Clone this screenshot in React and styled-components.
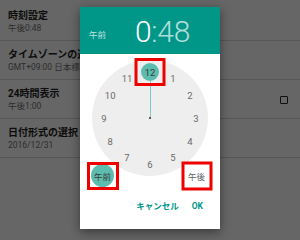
import React from 'react';
import styled, { createGlobalStyle } from 'styled-components';

const GlobalStyle = createGlobalStyle`
  html, body {
    margin: 0;
    padding: 0;
    width: 300px;
    height: 240px;
    overflow: hidden;
    font-family: Roboto, "Noto Sans CJK JP", sans-serif;
  }
`;

const TEAL = '#009688';

const Screen = styled.div`
  position: relative;
  width: 300px;
  height: 240px;
  background: #ffffff;
  overflow: hidden;
`;

const SettingsList = styled.div`
  display: flex;
  flex-direction: column;
  padding-top: 2px;
`;

const Row = styled.div`
  display: flex;
  align-items: center;
  height: 38px;
  padding: 0 12px 0 8px;
  border-bottom: 1px solid #d6d6d6;
`;

const RowText = styled.div`
  flex: 1;
  display: flex;
  flex-direction: column;
  gap: 2px;
  padding-top: 1px;
`;

const Title = styled.div`
  font-size: 10px;
  font-weight: 700;
  color: #212121;
  line-height: 11px;
  white-space: nowrap;
`;

const Subtitle = styled.div`
  font-size: 8.5px;
  color: #737373;
  line-height: 10px;
  white-space: nowrap;
`;

const Checkbox = styled.div`
  width: 6px;
  height: 6px;
  border: 1.5px solid #262626;
  border-radius: 1px;
  margin-top: 1px;
`;

const Scrim = styled.div`
  position: absolute;
  inset: 0;
  background: rgba(0, 0, 0, 0.6);
  display: flex;
  justify-content: center;
  align-items: flex-start;
  padding-top: 7px;
`;

const Dialog = styled.div`
  width: 140px;
  height: 222px;
  background: #ffffff;
  box-shadow: 0 3px 10px rgba(0, 0, 0, 0.45);
  display: flex;
  flex-direction: column;
`;

const Header = styled.div`
  height: 47px;
  background: ${TEAL};
  display: flex;
  align-items: flex-end;
  justify-content: space-between;
  padding: 0 30px 8px 9px;
  box-sizing: border-box;
`;

const HeaderAmPm = styled.div`
  font-size: 8.5px;
  color: rgba(255, 255, 255, 0.75);
  line-height: 10px;
  margin-bottom: 6px;
`;

const Time = styled.div`
  font-size: 30px;
  font-weight: 300;
  line-height: 28px;
  color: rgba(255, 255, 255, 0.7);
  letter-spacing: -0.3px;
`;

const Hour = styled.span`
  color: #ffffff;
`;

const Body = styled.div`
  flex: 1;
  display: flex;
  flex-direction: column;
  align-items: center;
  padding-top: 6px;
`;

const Face = styled.div`
  position: relative;
  width: 116px;
  height: 116px;
  border-radius: 50%;
  background: #eeeeee;
`;

const Hand = styled.div`
  position: absolute;
  left: 57.5px;
  top: 21px;
  width: 1px;
  height: 37px;
  background: #80cbc4;
`;

const CenterDot = styled.div`
  position: absolute;
  left: 57px;
  top: 57px;
  width: 2px;
  height: 2px;
  background: #5a5a5a;
`;

const Number = styled.div`
  position: absolute;
  width: 18px;
  height: 18px;
  margin: -9px 0 0 -9px;
  border-radius: 50%;
  display: flex;
  align-items: center;
  justify-content: center;
  font-size: 9.5px;
  color: ${({ $selected }) => ($selected ? '#3a3a3a' : '#6a6a6a')};
  background: ${({ $selected }) => ($selected ? '#5cbcae' : 'transparent')};
`;

const Highlight = styled.div`
  position: absolute;
  left: 50%;
  top: 50%;
  width: ${({ $w = 31 }) => `${$w}px`};
  height: ${({ $h = 28 }) => `${$h}px`};
  transform: translate(-50%, -50%);
  border: 3px solid #ee0000;
  box-sizing: border-box;
  pointer-events: none;
`;

const AmPmRow = styled.div`
  align-self: stretch;
  display: flex;
  justify-content: space-between;
  padding: 0 12px 0 11px;
  margin-top: -12px;
`;

const AmPmButton = styled.div`
  position: relative;
  width: 23px;
  height: 23px;
  border-radius: 50%;
  display: flex;
  align-items: center;
  justify-content: center;
  font-size: 8.5px;
  color: ${({ $selected }) => ($selected ? '#3a3a3a' : '#616161')};
  background: ${({ $selected }) => ($selected ? '#5cbcae' : 'transparent')};
`;

const Actions = styled.div`
  align-self: stretch;
  display: flex;
  justify-content: flex-end;
  align-items: center;
  gap: 13px;
  padding: 0 17px 0 0;
  margin-top: 13px;
`;

const ActionButton = styled.div`
  font-size: 8.5px;
  font-weight: 700;
  color: ${TEAL};
  line-height: 12px;
`;

const settings = [
  { title: '時刻設定', sub: '午後0:48' },
  { title: 'タイムゾーンの選択', sub: 'GMT+09:00 日本標準時' },
  { title: '24時間表示', sub: '午後1:00', checkbox: true },
  { title: '日付形式の選択', sub: '2016/12/31' },
];

const hours = [12, 1, 2, 3, 4, 5, 6, 7, 8, 9, 10, 11];

function ClockFace() {
  return (
    <Face>
      <Hand />
      <CenterDot />
      {hours.map((h, i) => {
        const a = (i * Math.PI) / 6;
        const x = 58 + 46 * Math.sin(a);
        const y = 58 - 46 * Math.cos(a);
        return (
          <Number key={h} $selected={h === 12} style={{ left: x, top: y }}>
            {h}
            {h === 12 && <Highlight />}
          </Number>
        );
      })}
    </Face>
  );
}

export default function App() {
  return (
    <Screen>
      <GlobalStyle />
      <SettingsList>
        {settings.map((s) => (
          <Row key={s.title}>
            <RowText>
              <Title>{s.title}</Title>
              <Subtitle>{s.sub}</Subtitle>
            </RowText>
            {s.checkbox && <Checkbox />}
          </Row>
        ))}
      </SettingsList>
      <Scrim>
        <Dialog>
          <Header>
            <HeaderAmPm>午前</HeaderAmPm>
            <Time>
              <Hour>0</Hour>:48
            </Time>
          </Header>
          <Body>
            <ClockFace />
            <AmPmRow>
              <AmPmButton $selected>
                午前
                <Highlight $w={32} />
              </AmPmButton>
              <AmPmButton>
                午後
                <Highlight $h={29} />
              </AmPmButton>
            </AmPmRow>
            <Actions>
              <ActionButton>キャンセル</ActionButton>
              <ActionButton>OK</ActionButton>
            </Actions>
          </Body>
        </Dialog>
      </Scrim>
    </Screen>
  );
}
